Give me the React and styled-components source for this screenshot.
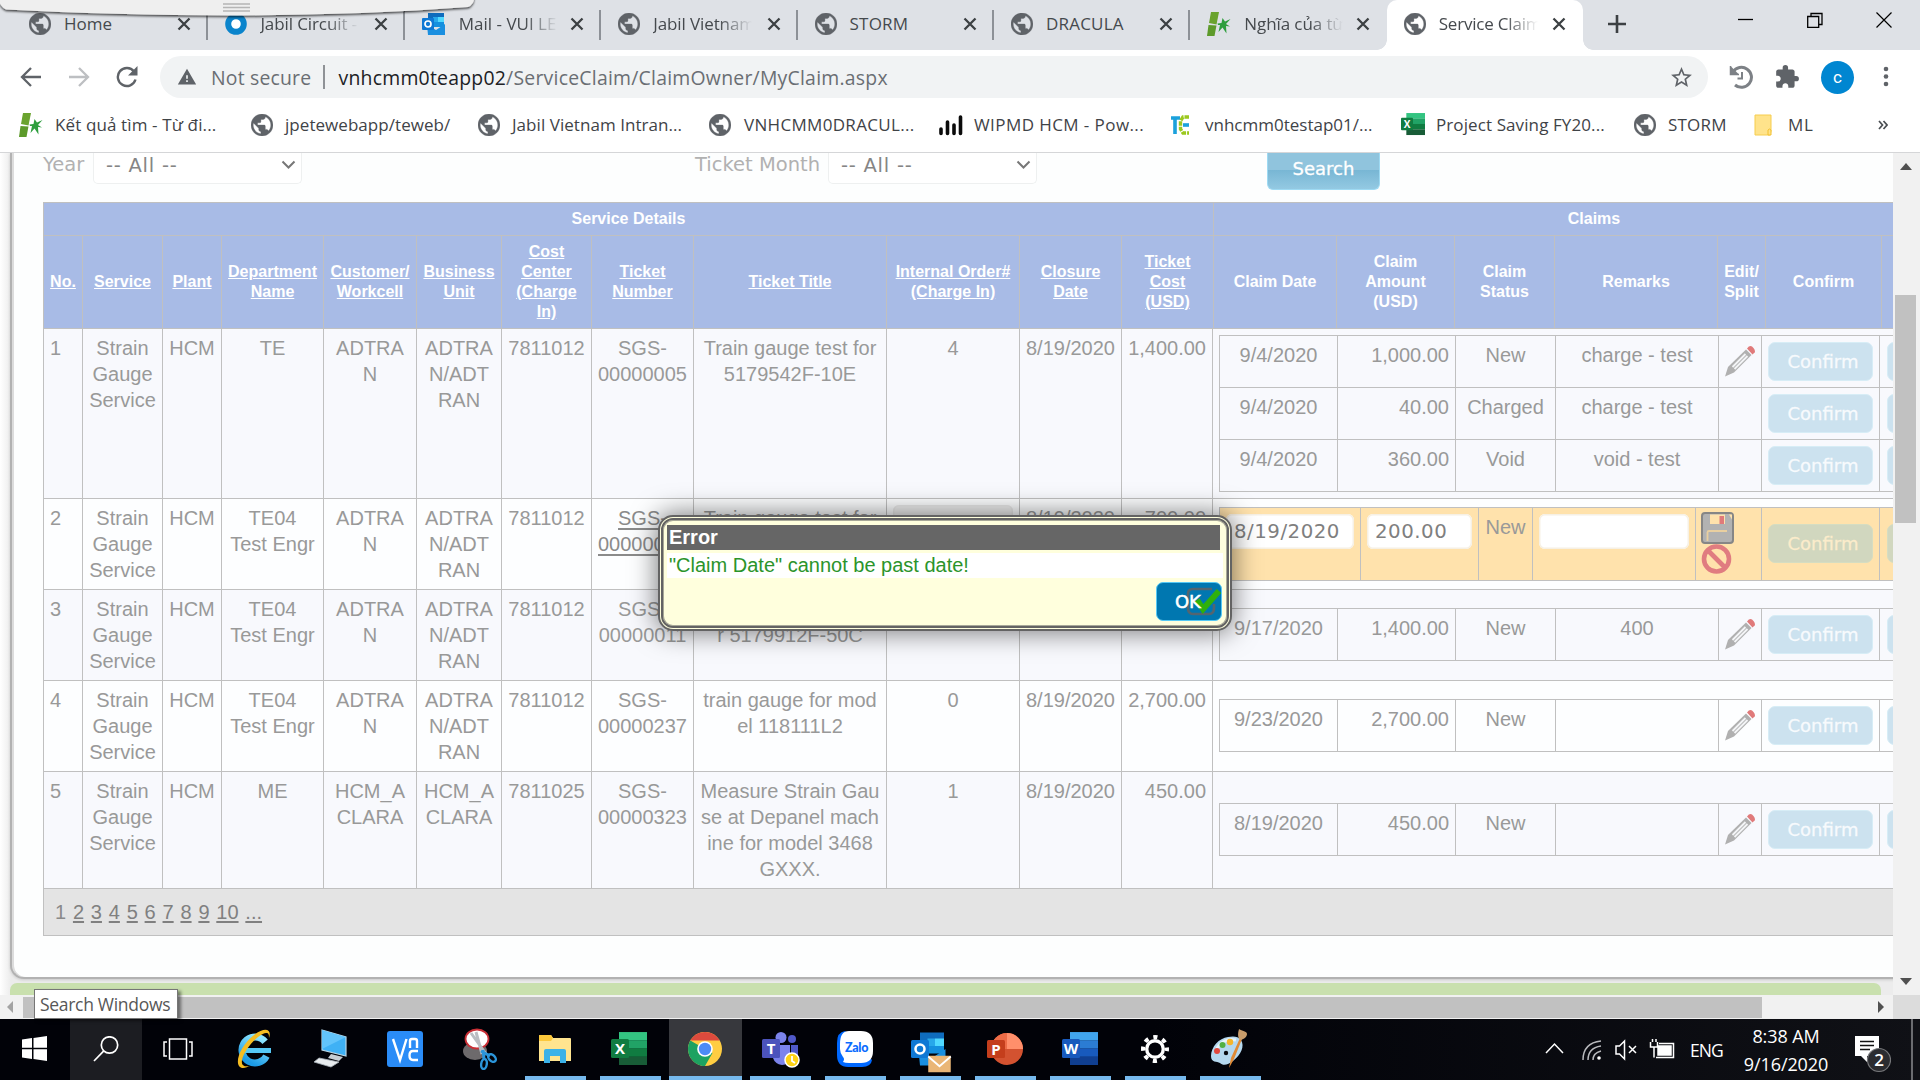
import React from "react";
import styled, { createGlobalStyle, css } from "styled-components";
import { MdWarning, MdStarBorder, MdExtension } from "react-icons/md";

const ui = `"Open Sans", "Noto Sans", sans-serif`;
const arial = `"Liberation Sans", Arial, sans-serif`;
const verdana = `"DejaVu Sans", Verdana, sans-serif`;

const GlobalStyle = createGlobalStyle`
  * { box-sizing: border-box; }
  body { margin: 0; background: #fff; }
`;

const Screen = styled.div`
  position: relative;
  width: 1920px;
  height: 1080px;
  overflow: hidden;
  display: flex;
  flex-direction: column;
  font-family: ${ui};
`;

/* ---------- browser chrome ---------- */
const TabStrip = styled.div`
  height: 50px;
  background: #dee1e6;
  display: flex;
  padding-left: 12px;
  flex: none;
`;
const Tab = styled.div`
  width: 196.4px;
  height: 50px;
  flex: none;
  display: flex;
  align-items: center;
  padding: 0 0 2px 17px;
  position: relative;
  color: #45494d;
  ${(p) =>
    p.$active &&
    css`
      background: #fff;
      border-radius: 10px 10px 0 0;
    `}
  ${(p) =>
    p.$line &&
    css`
      &::after {
        content: "";
        position: absolute;
        right: 0;
        top: 10px;
        width: 2px;
        height: 30px;
        background: #8d9197;
      }
    `}
`;
const TabFoot = styled.i`
  position: absolute;
  bottom: 0;
  ${(p) => p.$side}: -10px;
  width: 10px;
  height: 10px;
  background: radial-gradient(circle at ${(p) => (p.$side === "left" ? "0 0" : "100% 0")}, #dee1e6 9.5px, #fff 10px);
`;
const TabTitle = styled.div`
  margin-left: 13px;
  font-size: 17px;
  letter-spacing: ${(p) => p.$ls || 0}px;
  line-height: 24px;
  white-space: nowrap;
  ${(p) => p.$fade && css`
    mask-image: linear-gradient(90deg, #000 66px, transparent 99px);
  `}
`;
const TabClose = styled.svg`
  width: 14px;
  height: 14px;
  margin-left: auto;
  margin-right: 17px;
  flex: none;
`;
const NewTab = styled.svg`
  width: 20px;
  height: 20px;
  margin: 14px 0 0 24px;
`;
const WindowButtons = styled.div`
  margin-left: auto;
  display: flex;
  gap: 53px;
  padding: 12px 28px 0 0;
  svg { width: 16px; height: 16px; }
`;

const Toolbar = styled.div`
  height: 54px;
  flex: none;
  background: #fff;
  display: flex;
  align-items: center;
  padding: 0 24px 0 20px;
`;
const NavIcon = styled.svg`
  width: 22px;
  height: 22px;
  margin-right: 26px;
  flex: none;
`;
const Omnibox = styled.div`
  margin-left: -4px;
  width: 1548px;
  height: 42px;
  border-radius: 21px;
  background: #f1f3f4;
  display: flex;
  align-items: center;
  padding: 0 14px 0 17px;
  font-size: 19.4px;
  color: #6a6e73;
  white-space: nowrap;
  flex: none;
`;
const Secure = styled.span`
  margin-left: 14px;
  width: 100px;
  letter-spacing: 0.2px;
`;
const OmniLine = styled.i`
  width: 1.5px;
  height: 24px;
  background: #8f9296;
  margin: 0 14px 0 12px;
`;
const Url = styled.span`
  flex: 1;
  letter-spacing: 0.24px;
  b { font-weight: 400; color: #202124; }
`;
const ToolIcons = styled.div`
  display: flex;
  align-items: center;
  justify-content: space-between;
  width: 164px;
  margin-left: 21px;
  color: #5f6368;
`;
const Avatar = styled.div`
  width: 33px;
  height: 33px;
  border-radius: 50%;
  background: #0086d1;
  color: #fff;
  font: 17px/32px Roboto, sans-serif;
  text-align: center;
`;
const Bookmarks = styled.div`
  height: 49px;
  flex: none;
  display: flex;
  align-items: center;
  padding: 0 0 7px 19px;
  border-bottom: 1px solid #d5d6d8;
  color: #3f4347;
  background: #fff;
`;
const Bookmark = styled.div`
  width: ${(p) => p.$w}px;
  flex: none;
  display: flex;
  align-items: center;
  gap: ${(p) => p.$gap ?? 12}px;
  font-size: 17px;
  line-height: 24px;
  letter-spacing: ${(p) => p.$ls || 0}px;
  white-space: nowrap;
  svg { flex: none; }
`;

/* ---------- page ---------- */
const Viewport = styled.div`
  height: 866px;
  flex: none;
  display: grid;
  grid-template-columns: 1893px 27px;
  grid-template-rows: 842px 24px;
`;
const Page = styled.div`
  overflow: hidden;
  background: linear-gradient(90deg, #fff, #ececec 11px);
  padding-left: 10px;
`;
const Panel = styled.div`
  height: 826px;
  width: 1910px;
  background: #fdfefe;
  border: solid #b2b2b2;
  border-width: 0 0 2px 2px;
  border-radius: 0 0 0 14px;
  box-shadow: inset 2px 0 0 #dcdcdc, 0 1px 3px rgba(0, 0, 0, 0.15);
  padding-left: 31px;
`;
const GreenBar = styled.div`
  margin-top: 4px;
  height: 12px;
  width: 1871px;
  border-radius: 7px 7px 0 0;
  background: #c9e0ae;
`;
const Filters = styled.div`
  height: 49px;
  display: flex;
  align-items: flex-start;
  font-family: ${verdana};
`;
const FilterLabel = styled.label`
  font-size: 19.5px;
  line-height: 23px;
  margin: 0 8px 0 0;
  width: ${(p) => p.$w}px;
  color: #b1b1b1;
  white-space: nowrap;
`;
const Select = styled.div`
  width: 209px;
  height: 31px;
  border: 1.5px solid #eef0f0;
  border-top: 0;
  border-radius: 0 0 5px 5px;
  background: #fff;
  color: #858585;
  font-size: 19.5px;
  letter-spacing: 0.75px;
  line-height: 26px;
  padding: 0 5px 0 12px;
  display: flex;
  align-items: flex-start;
  justify-content: space-between;
  margin-right: ${(p) => p.$gap}px;
  svg { margin-top: 7px; }
`;
const SearchButton = styled.div`
  width: 113px;
  height: 37px;
  border: 1.5px solid #9edaf3;
  border-top: 0;
  border-radius: 0 0 6px 6px;
  background: linear-gradient(#90c4dd 0 17px, #78b6d4 17px, #93c9e2);
  color: #fff;
  font-size: 18px;
  line-height: 31px;
  text-align: center;
  -webkit-text-stroke: 0.3px #fff;
`;

/* ---------- grid ---------- */
const line = "#c0c0c0";
const DataGrid = styled.div`
  width: 1931px;
  border-left: 1px solid ${line};
  font-family: ${arial};
  color: #999;
`;
const GroupHead = styled.div`
  display: grid;
  grid-template-columns: 1169px 761px;
  height: 33px;
  background: #a8bbe6;
  border-top: 1px solid ${line};
`;
const HeadRow = styled.div`
  display: grid;
  grid-template-columns: 38px 80px 59px 102px 93px 85px 90px 102px 193px 133px 102px 92px 123px 118px 100px 163px 48px 116px 93px;
  height: 93px;
  background: #a8bbe6;
  border-top: 1px solid ${line};
`;
const Head = styled.div`
  display: flex;
  align-items: center;
  justify-content: center;
  text-align: center;
  color: #fff;
  font-size: 16px;
  font-weight: 700;
  line-height: 20px;
  white-space: pre;
  text-decoration: ${(p) => (p.$link ? "underline" : "none")};
  & + & { border-left: 1px solid ${line}; }
`;
const Row = styled.div`
  display: grid;
  grid-template-columns: 38px 80px 59px 102px 93px 85px 90px 102px 193px 133px 102px 91px 762px;
  height: ${(p) => p.$h}px;
  background: ${(p) => (p.$alt ? "#fdfeff" : "#f8f9fd")};
  border-top: 1px solid ${line};
`;
const Cell = styled.div`
  padding: 6px;
  font-size: 20px;
  line-height: 26px;
  white-space: pre;
  text-align: ${(p) => p.$align || "center"};
  display: flex;
  flex-direction: column;
  align-items: ${(p) => ({ left: "flex-start", right: "flex-end" })[p.$align] || "center"};
  & + & { border-left: 1px solid ${line}; }
  a { text-decoration: underline; text-decoration-thickness: 2px; text-underline-offset: 3px; color: #8b8b8b; }
`;
const ClaimsCell = styled.div`
  border-left: 1px solid ${line};
  padding: 0 0 ${(p) => (p.$single ? 1 : 0)}px 6px;
  display: flex;
  align-items: center;
`;
const Claims = styled.div`
  border: solid ${line};
  border-width: 0 0 1px 1px;
  background: ${(p) => (p.$edit ? "#ffe2ac" : "transparent")};
`;
const Claim = styled.div`
  display: grid;
  grid-template-columns: ${(p) => (p.$edit ? "140px 118px 54px 163px 66px" : "117px 118px 100px 163px 43px")} 118px 120px;
  height: ${(p) => (p.$edit ? 73 : 52)}px;
  border-top: 1px solid ${line};
`;
const ToolCell = styled.div`
  border-left: 1px solid ${line};
  padding-left: ${(p) => p.$pad ?? 6}px;
  padding-bottom: ${(p) => (p.$edit ? 2 : 0)}px;
  display: flex;
  flex-direction: column;
  justify-content: center;
`;
const Button = styled.div`
  width: 105px;
  height: 39px;
  border-radius: 7px;
  border: 1.5px solid ${(p) => (p.$edit ? "#d5ddc2" : "#d7edf6")};
  background: ${(p) => (p.$edit ? "#d1d7bf" : "#cce2ef")};
  color: ${(p) => (p.$edit ? "#fbeccb" : "#f7fafd")};
  font-family: ${verdana};
  font-size: 18px;
  line-height: 37px;
  text-align: center;
  padding-left: 5px;
  -webkit-text-stroke: 0.3px currentColor;
`;
const Input = styled.div`
  width: ${(p) => p.$w}px;
  height: 35px;
  flex: none;
  align-self: flex-start;
  border-radius: 6px;
  background: ${(p) => (p.$off ? "#f1f1f1" : "#fff")};
  box-shadow: inset 0 0 0 1.5px ${(p) => (p.$off ? "#ebebeb" : "#f6f0e4")};
  color: #7f7f7f;
  font-family: ${verdana};
  font-size: 19.8px;
  letter-spacing: 0.5px;
  line-height: 36px;
  text-align: left;
  padding-left: 8px;
`;
const Pager = styled.div`
  height: 48px;
  background: #e4e4e4;
  border: solid ${line};
  border-width: 1px 0;
  padding: 9px 0 0 11px;
  display: flex;
  gap: 6.8px;
  font-size: 20px;
  line-height: 28px;
  color: #8a8a8a;
  a { text-decoration: underline; text-decoration-thickness: 2px; text-underline-offset: 2px; color: #808080; }
`;

/* ---------- scroll bars ---------- */
const VScroll = styled.div`
  background: #f1f1f1;
  display: flex;
  flex-direction: column;
  align-items: center;
  justify-content: space-between;
  padding: 10px 2px 10px 0;
`;
const VThumb = styled.div`
  width: 21px;
  height: 228px;
  background: #c1c1c1;
  margin: 125px 0 auto;
`;
const HScroll = styled.div`
  background: #f1f1f1;
  display: flex;
  align-items: center;
  padding: 0 9px 0 7px;
`;
const HThumb = styled.div`
  width: 1739px;
  height: 21px;
  background: #c1c1c1;
  margin: 0 auto 0 10px;
`;
const Corner = styled.div`
  background: #dcdcdc;
`;

/* ---------- dialog ---------- */
const Dialog = styled.div`
  position: absolute;
  left: 658px;
  top: 515px;
  width: 574px;
  height: 116px;
  border: 5px double #636363;
  border-radius: 15px;
  background: #ffffdd;
  box-shadow: 0 0 26px 2px rgba(0, 0, 0, 0.5), inset 0 0 0 1px #a8a898;
  padding: 5px 2px 0 4px;
  display: flex;
  flex-direction: column;
  font-family: ${arial};
`;
const DialogTitle = styled.div`
  width: 553px;
  height: 25px;
  background: #666;
  color: #fff;
  font-size: 20px;
  font-weight: 700;
  line-height: 24px;
  padding-left: 2px;
`;
const DialogText = styled.div`
  margin: 3px 0 0;
  width: 556px;
  height: 25px;
  background: #fff;
  color: #2b942b;
  font-size: 20px;
  line-height: 24px;
  padding-left: 2px;
`;
const OkButton = styled.div`
  position: relative;
  margin: 4px 3px 0 auto;
  width: 66px;
  height: 39px;
  flex: none;
  border: 1.5px solid #55c8f5;
  border-radius: 7px;
  background: #0077b0;
  color: #fff;
  font: 18px/38px ${verdana};
  padding-left: 18px;
  -webkit-text-stroke: 0.5px #fff;
  svg { position: absolute; right: 0; top: 1px; }
  span { position: relative; letter-spacing: -0.2px; }
`;
const Tooltip = styled.div`
  position: absolute;
  left: 34px;
  top: 989px;
  width: 144px;
  height: 30px;
  border: 1.5px solid #767676;
  background: #fff;
  box-shadow: 3px 2px 3px rgba(0, 0, 0, 0.45);
  color: #575757;
  font-size: 17.5px;
  letter-spacing: -0.3px;
  line-height: 29px;
  padding-left: 5px;
  white-space: nowrap;
`;
const DockHandle = styled.svg`
  position: absolute;
  left: 0;
  top: 0;
`;

/* ---------- taskbar ---------- */
const Taskbar = styled.div`
  height: 61px;
  flex: none;
  background: linear-gradient(90deg, #010208 60%, #101116);
  display: flex;
  color: #fff;
`;
const Task = styled.div`
  width: ${(p) => p.$w || 75}px;
  height: 61px;
  flex: none;
  display: flex;
  align-items: center;
  justify-content: center;
  padding: 0 ${(p) => p.$shift ?? 2}px 2px 0;
  position: relative;
  &::after {
    content: "";
    display: ${(p) => (p.$open ? "block" : "none")};
    position: absolute;
    bottom: 0;
    left: ${(p) => (p.$on ? 1 : 7)}px;
    right: ${(p) => (p.$on ? 1 : 7)}px;
    height: 4px;
    background: #76b9ed;
  }
  &::before {
    content: "";
    display: ${(p) => (p.$on ? "block" : "none")};
    position: absolute;
    inset: 0 1px;
    background: ${(p) => (p.$open ? "#37383d" : "#1c1d22")};
  }
  svg { position: relative; flex: none; }
`;
const Tray = styled.div`
  margin-left: auto;
  display: flex;
  align-items: center;
  font-size: 17.5px;
  svg { flex: none; }
`;
const TrayIcons = styled.svg`
  margin-right: -48px;
`;
const Lang = styled.span`
  width: 34px;
  margin: 0 19px 0 15px;
  letter-spacing: -0.9px;
`;
const Clock = styled.div`
  width: 86px;
  text-align: center;
  font-size: 18px;
  line-height: 28px;
  letter-spacing: -0.1px;
  white-space: nowrap;
`;
const Notify = styled.svg`
  margin: 10px 20px 0 26px;
`;
const ShowDesktop = styled.i`
  width: 9px;
  height: 61px;
  border-left: 2px solid #6b6c70;
`;

/* ---------- icons ---------- */
const Globe = () => (
  <svg width="22" height="22" viewBox="2 2 20 20">
    <path
      d="M12 2C6.480 2 2 6.480 2 12s4.480 10 10 10 10-4.480 10-10S17.520 2 12 2zm-1 17.930c-3.950-.490-7-3.850-7-7.930 0-.620.080-1.210.210-1.790L9 15v1c0 1.100.900 2 2 2v1.930zm6.900-2.540c-.260-.810-1-1.390-1.900-1.390h-1v-3c0-.550-.450-1-1-1H8v-2h2c.550 0 1-.450 1-1V7h2c1.100 0 2-.900 2-2v-.410c2.930 1.190 5 4.060 5 7.410 0 2.080-.800 3.970-2.100 5.390z"
      fill="#5f6368"
      stroke="#5f6368"
      strokeWidth=".3"
    />
  </svg>
);

const Bamboo = () => (
  <svg width="24" height="24" viewBox="0 0 24 24">
    <path d="M4 0h8L9.500 12.500 2 11z" fill="#6aa32e" />
    <path d="M1.500 13l8 .500L7.500 24H0z" fill="#5d9a2a" />
    <path d="M11 13l-.500-1.500 4-.500 1-5 2.500 3.500L23.500 7 19 12l4 2.500-4-.500.500 7.500-4-6-4 4.500 1.500-7z" fill="#2e9e3e" />
  </svg>
);
const Ring = () => (
  <svg width="22" height="22" viewBox="0 0 22 22">
    <circle cx="11" cy="11" r="7.800" fill="#fff" stroke="#0a84cc" strokeWidth="6" />
  </svg>
);
const Outlook = ({ size = 24, mail }) => (
  <svg width={size} height={size} viewBox="0 0 24 24" overflow="visible">
    <rect x="6" y="1" width="16" height="13" fill="#0f6cbd" />
    <rect x="11" y="5" width="5" height="5" fill="#28a8ea" />
    <rect x="16" y="5" width="6" height="5" fill="#50d9ff" />
    <rect x="11" y="10" width="11" height="5" fill="#1490df" />
    <path d="M5 13l9 5 9-6v11H6z" fill="#1a8fe0" />
    <rect x="0" y="6" width="12" height="12" rx="1" fill="#0f78d4" />
    <circle cx="6" cy="12" r="3" fill="none" stroke="#fff" strokeWidth="1.700" />
    {mail && (
      <g>
        <rect x="11.500" y="16.500" width="15" height="11" fill="#eab676" />
        <path d="M11.500 17l7.500 6.500 7.500-6.500" fill="none" stroke="#fff" strokeWidth="1.200" />
      </g>
    )}
  </svg>
);
const Bars = () => (
  <svg width="24" height="22" viewBox="0 0 24 22" stroke="#0b0b0b" strokeWidth="3.600" strokeLinecap="round">
    <path d="M2 15v4.500M8.500 8v11.500M15 11v8.500M21.500 3v16.500" />
  </svg>
);
const TeLogo = () => (
  <svg width="22" height="20" viewBox="0 0 22 20" fill="none">
    <path d="M1 3h9M5 3v16" stroke="#1ba1dc" strokeWidth="3.600" />
    <path d="M19 2h-6l-2.500 4v8l2.500 4h6" stroke="#9bc81e" strokeWidth="3.400" strokeDasharray="4.500 1" />
    <path d="M13 10h6" stroke="#1ba1dc" strokeWidth="3.600" />
  </svg>
);
const OfficeIcon = ({ size, letter, bands, badge }) => (
  <svg width={size} height={size * 0.92} viewBox="0 0 36 33">
    {bands.map((c, i) => (
      <rect key={c} x="8" y={i * 8.2} width="28" height="8.400" fill={c} />
    ))}
    <rect x="0" y="7" width="18" height="19" rx="1.500" fill={badge} />
    <text x="9" y="22" fontFamily="Open Sans, sans-serif" fontWeight="700" fontSize="15" fill="#fff" textAnchor="middle">{letter}</text>
  </svg>
);
const excelBands = ["#33c481", "#21a366", "#107c41", "#185c37"];
const Folder = () => (
  <svg width="18" height="22" viewBox="0 0 18 22">
    <path d="M1 1h16v16l-1 4H1z" fill="#ffe38b" stroke="#f6cd4e" strokeWidth="1" />
    <path d="M14 21v-5q1.500-2 3 0v5z" fill="#ffe38b" stroke="#f2c02f" strokeWidth="1" />
  </svg>
);
const Chevron = () => (
  <svg width="15" height="10" viewBox="0 0 15 10">
    <path d="M1.500 1.500l6 6 6-6" fill="none" stroke="#777" strokeWidth="2" />
  </svg>
);
const Pencil = () => (
  <svg width="30" height="31" viewBox="0 0 30 31">
    <path d="M0 30.500l3-9.500L21 3.500l5.500 5.500L9 26.500z" fill="#b0b0b0" />
    <path d="M7.500 21L20.500 8M9.500 23l13-13" stroke="#f3f4f6" strokeWidth="1.900" />
    <path d="M22 2.500q3.500-4.500 6.500-.500t0 5.500l-1 1-5.500-6z" fill="#e07a7a" />
  </svg>
);
const Save = () => (
  <svg width="33" height="32" viewBox="0 0 33 32">
    <rect x="1" y="1" width="31" height="30" rx="3" fill="#b2b2b2" stroke="#868686" strokeWidth="2" />
    <path d="M28 2.500h3v5z" fill="#ffe2ac" />
    <rect x="9" y="2.500" width="15" height="9.500" fill="#ffe2ac" />
    <rect x="18.500" y="4" width="4.500" height="8" fill="#e07a7a" />
    <path d="M6.500 29V20.500q0-1.500 1.500-1.500h18" fill="none" stroke="#e9cfa0" strokeWidth="1.800" />
  </svg>
);
const Forbid = () => (
  <svg width="31" height="30" viewBox="0 0 31 30">
    <circle cx="15.500" cy="15" r="12.500" fill="none" stroke="#e07c80" strokeWidth="4.600" />
    <path d="M7 6.500l17 17" stroke="#e07c80" strokeWidth="4.600" />
  </svg>
);
const Triangle = ({ d, c = "#505050", w = 16, h = 8 }) => (
  <svg width={w} height={h} viewBox={`0 0 ${w} ${h}`}><path d={d} fill={c} /></svg>
);

const Ie = () => (
  <svg width="36" height="42" viewBox="0 0 36 42" overflow="visible">
    <defs>
      <linearGradient id="ieBlue" x1="0" y1="0" x2="0" y2="1">
        <stop offset="0" stopColor="#8fe6ff" />
        <stop offset="1" stopColor="#1c9be6" />
      </linearGradient>
    </defs>
    <circle cx="19" cy="22" r="13" fill="none" stroke="url(#ieBlue)" strokeWidth="7" strokeDasharray="66 16" transform="rotate(28 19 22)" />
    <path d="M9 20h26v5H9z" fill="#55c8f6" />
    <path d="M33 10C36 2 30-2 18 7 6 16-1 32 3 38c3 4 8 1 11 0-5 1-9 0-8-6C8 22 22 6 30 5c3 0 3 2 3 5z" fill="#f5bd22" />
  </svg>
);
const Pc = () => (
  <svg width="34" height="40" viewBox="0 0 34 40">
    <path d="M9 1l24 7v19L9 21z" fill="#3fb1f5" stroke="#b8d6e6" strokeWidth="1.200" />
    <path d="M9 1l24 7-24 12z" fill="#62c4fb" />
    <path d="M18 25l12 3-4 4-11-3z" fill="#c7ced4" />
    <path d="M6 29l20 4-8 5-17-5z" fill="#e7ebee" stroke="#a9b3ba" strokeWidth=".800" />
  </svg>
);
const Vnc = () => (
  <svg width="36" height="36" viewBox="0 0 36 36">
    <rect width="36" height="36" rx="3" fill="#2a8cf7" />
    <path d="M6 8l7 21 6.500-21M23 17V10q0-2 2-2h3q2 0 2 2v7M31 20h-5q-3.500 0-3.500 4.500T26 29h5" fill="none" stroke="#fff" strokeWidth="2.400" />
  </svg>
);
const Snip = () => (
  <svg width="34" height="42" viewBox="0 0 34 42">
    <ellipse cx="12" cy="23" rx="12" ry="9" fill="#6d6a6c" />
    <ellipse cx="14" cy="11" rx="11.500" ry="9.500" fill="#fff" stroke="#c92f36" strokeWidth="1.800" />
    <path d="M8 5l15 21M13 4l6 22" stroke="#b9bdc2" strokeWidth="3" />
    <ellipse cx="29" cy="30" rx="4.500" ry="3" transform="rotate(45 29 30)" fill="none" stroke="#2b95da" strokeWidth="2.400" />
    <ellipse cx="21" cy="36" rx="2.800" ry="5" transform="rotate(8 21 36)" fill="none" stroke="#2b95da" strokeWidth="2.400" />
    <path d="M18 23l9 5M20 22l1 9" stroke="#2b95da" strokeWidth="3" />
  </svg>
);
const Explorer = () => (
  <svg width="32" height="28" viewBox="0 0 32 28">
    <path d="M0 1q0-1 1-1h11l2 3h17q1 0 1 1v22H0z" fill="#ffe48f" />
    <path d="M0 1q0-1 1-1h11l2 3-2 3H0z" fill="#fcc83b" />
    <path d="M5 28V16q0-2 2-2h18q2 0 2 2v12h-6v-7H11v7z" fill="#3cb2e8" />
  </svg>
);
const Chrome = () => (
  <svg width="34" height="34" viewBox="0 0 34 34">
    <circle cx="17" cy="17" r="17" fill="#ffcd42" />
    <path d="M2.300 8.500A17 17 0 0 1 31.700 8.500H17z" fill="#dc4a3d" />
    <path d="M2.300 8.500A17 17 0 0 0 17 34l7.500-13L17 17z" fill="#1da261" />
    <circle cx="17" cy="17" r="7.800" fill="#fff" />
    <circle cx="17" cy="17" r="6.200" fill="#4c8bf5" />
  </svg>
);
const Teams = () => (
  <svg width="38" height="33" viewBox="0 0 38 33" overflow="visible">
    <circle cx="19" cy="5.500" r="5.500" fill="#7b83eb" />
    <circle cx="30" cy="7" r="4" fill="#5059c9" />
    <path d="M11 13h17v13q-1 7-8 7-7-1-9-7z" fill="#7b83eb" />
    <path d="M29 13h7v12q-2 3-7 2z" fill="#5059c9" />
    <rect y="7" width="18" height="19" rx="1.500" fill="#4b53bc" />
    <text x="9" y="22" fontFamily="Open Sans, sans-serif" fontWeight="700" fontSize="15" fill="#fff" textAnchor="middle">T</text>
    <circle cx="30" cy="28" r="7" fill="#fcd116" stroke="#fff" strokeWidth="1.500" />
    <path d="M30 24v5l3 2" fill="none" stroke="#fff" strokeWidth="1.800" />
  </svg>
);
const Zalo = () => (
  <svg width="36" height="36" viewBox="0 0 36 36">
    <path d="M8 0Q0 1 0 12v12q0 12 11 12h14q9 0 10-7z" fill="#0068ff" />
    <path d="M12 0h12q12 0 12 12v8q0 12-12 12H12q-4 0-6-1 2-3 0-5-3-4-3-8v-5Q3 0 12 0z" fill="#fff" />
    <text x="19.500" y="21" fontFamily="Lato, sans-serif" fontWeight="900" fontSize="12.500" fill="#0a6cff" textAnchor="middle" letterSpacing="-.3">Zalo</text>
  </svg>
);
const Ppt = () => (
  <svg width="36" height="32" viewBox="0 0 36 32">
    <circle cx="20" cy="16" r="16" fill="#d35230" />
    <path d="M20 0a16 16 0 0 1 16 16H20z" fill="#ff8f6b" />
    <path d="M20 0v16H4A16 16 0 0 1 20 0z" fill="#ed6c47" />
    <rect y="7" width="18" height="18" rx="1.500" fill="#c43e1c" />
    <text x="9" y="21.500" fontFamily="Open Sans, sans-serif" fontWeight="700" fontSize="15" fill="#fff" textAnchor="middle">P</text>
  </svg>
);
const Gear = () => (
  <svg width="28" height="28" viewBox="0 0 28 28" fill="none" stroke="#fff">
    <circle cx="14" cy="14" r="8.300" strokeWidth="3.400" />
    <circle cx="14" cy="14" r="12" strokeWidth="4" strokeDasharray="4.200 5.225" strokeDashoffset="2.100" />
  </svg>
);
const Paint = () => (
  <svg width="36" height="36" viewBox="0 0 36 36" overflow="visible">
    <path d="M17 6C8 7 0 16 0 25c0 7 6 5 9 7 3 3 8 2 13-2 8-6 12-15 8-21-3-4-8-4-13-3z" fill="#b5d8ef" />
    <path d="M5 20c3-9 12-13 20-11" stroke="#e6f4fc" strokeWidth="3" fill="none" />
    <circle cx="6" cy="20" r="3" fill="#e2483d" />
    <circle cx="11.500" cy="14" r="3" fill="#52b043" />
    <circle cx="19" cy="11" r="3.200" fill="#f6b52b" />
    <circle cx="15" cy="22" r="2.200" fill="#0a0b10" />
    <path d="M18 37l2-10 9-20 2 1-8 20z" fill="#e08a35" />
    <path d="M28 8c-2-5 0-9 0-10 3 2 8 2 8 5s-3 5-6 6z" fill="#c99d6b" />
  </svg>
);
const History = () => (
  <svg width="24" height="26" viewBox="0 0 24 26" fill="none" stroke="#7d8186">
    <path d="M4 8A10 10 0 1 1 6 21" strokeWidth="3" />
    <path d="M13 8v6.500H8.500" strokeWidth="2" />
    <path d="M1.500 2v8.500H10" fill="#7d8186" strokeWidth="1.500" />
  </svg>
);

/* ---------- data ---------- */
const tabs = [
  { t: "Home", icon: <Globe /> },
  { t: "Jabil Circuit -", icon: <Ring />, fade: 1, ls: -0.1 },
  { t: "Mail - VUI LE", icon: <Outlook />, fade: 1 },
  { t: "Jabil Vietnam", icon: <Globe />, fade: 1, ls: -0.1 },
  { t: "STORM", icon: <Globe />, ls: 0.2 },
  { t: "DRACULA", icon: <Globe />, ls: 0.2 },
  { t: "Nghĩa của từ", icon: <Bamboo />, fade: 1, ls: -0.1 },
  { t: "Service Claim", icon: <Globe />, fade: 1, active: 1, ls: -0.2 },
];
const bookmarks = [
  { t: "Kết quả tìm - Từ đi...", w: 232, ls: 0.12, icon: <Bamboo /> },
  { t: "jpetewebapp/teweb/", w: 227, ls: 0.05, icon: <Globe /> },
  { t: "Jabil Vietnam Intran...", w: 231, ls: 0.05, icon: <Globe /> },
  { t: "VNHCMM0DRACUL...", w: 230, gap: 13, ls: 0.32, icon: <Globe /> },
  { t: "WIPMD HCM - Pow...", w: 231, gap: 11, ls: 0.42, icon: <Bars /> },
  { t: "vnhcmm0testap01/...", w: 231, gap: 13, icon: <TeLogo /> },
  { t: "Project Saving FY20...", w: 233, gap: 11, ls: 0.1, icon: <OfficeIcon size={24} letter="X" bands={excelBands} badge="#107c41" /> },
  { t: "STORM", w: 120, ls: 0.2, icon: <Globe /> },
  { t: "ML", w: 110, gap: 16, ls: 0.8, icon: <Folder /> },
];
const heads = ["No.", "Service", "Plant", "Department\nName", "Customer/\nWorkcell", "Business\nUnit", "Cost\nCenter\n(Charge\nIn)", "Ticket\nNumber", "Ticket Title", "Internal Order#\n(Charge In)", "Closure\nDate", "Ticket\nCost\n(USD)"];
const claimHeads = ["Claim Date", "Claim\nAmount\n(USD)", "Claim\nStatus", "Remarks", "Edit/\nSplit", "Confirm", ""];
const service = "Strain\nGauge\nService";
const rows = [
  {
    h: 170,
    cells: ["1", service, "HCM", "TE", "ADTRA\nN", "ADTRA\nN/ADT\nRAN", "7811012", "SGS-\n00000005", "Train gauge test for\n5179542F-10E", "4", "8/19/2020", "1,400.00"],
    claims: [
      ["9/4/2020", "1,000.00", "New", "charge - test", true],
      ["9/4/2020", "40.00", "Charged", "charge - test", false],
      ["9/4/2020", "360.00", "Void", "void - test", false],
    ],
  },
  {
    h: 91,
    edit: true,
    cells: ["2", service, "HCM", "TE04\nTest Engr", "ADTRA\nN", "ADTRA\nN/ADT\nRAN", "7811012", "SGS-\n00000006", "Train gauge test for", "0", "8/19/2020", "700.00"],
    claims: [["8/19/2020", "200.00", "New", "", true]],
  },
  {
    h: 91,
    cells: ["3", service, "HCM", "TE04\nTest Engr", "ADTRA\nN", "ADTRA\nN/ADT\nRAN", "7811012", "SGS-\n00000011", "Train gauge test fo\nr 5179912F-50C", "", "8/19/2020", "1,400.00"],
    claims: [["9/17/2020", "1,400.00", "New", "400", true]],
  },
  {
    h: 91,
    cells: ["4", service, "HCM", "TE04\nTest Engr", "ADTRA\nN", "ADTRA\nN/ADT\nRAN", "7811012", "SGS-\n00000237", "train gauge for mod\nel 118111L2", "0", "8/19/2020", "2,700.00"],
    claims: [["9/23/2020", "2,700.00", "New", "", true]],
  },
  {
    h: 117,
    cells: ["5", service, "HCM", "ME", "HCM_A\nCLARA", "HCM_A\nCLARA", "7811025", "SGS-\n00000323", "Measure Strain Gau\nse at Depanel mach\nine for model 3468\nGXXX.", "1", "8/19/2020", "450.00"],
    claims: [["8/19/2020", "450.00", "New", "", true]],
  },
];

function ClaimRow({ claim, edit }) {
  const [date, amount, status, remarks, editable] = claim;
  return (
    <Claim $edit={edit}>
      <Cell>{edit ? <Input $w={128}>{date}</Input> : date}</Cell>
      <Cell $align="right">{edit ? <Input $w={105}>{amount}</Input> : amount}</Cell>
      <Cell>{status}</Cell>
      <Cell>{edit ? <Input $w={150} /> : remarks}</Cell>
      <ToolCell $edit={edit} $pad={edit ? 5 : 6}>
        {edit ? <><Save /><Forbid /></> : editable && <Pencil />}
      </ToolCell>
      <ToolCell $edit={edit}><Button $edit={edit}>Confirm</Button></ToolCell>
      <ToolCell $edit={edit} $pad={7}><Button $edit={edit} /></ToolCell>
    </Claim>
  );
}

function GridRow({ row, index }) {
  return (
    <Row $h={row.h} $alt={index % 2 === 1}>
      {row.cells.map((c, i) => (
        <Cell key={i} $align={i === 0 ? "left" : i === 11 ? "right" : undefined}>
          {row.edit && i === 7 ? <a>{c}</a> : row.edit && i === 9 ? <Input $w={120} $off>{c}</Input> : c}
        </Cell>
      ))}
      <ClaimsCell $single={index > 1}>
        <Claims $edit={row.edit}>
          {row.claims.map((c, i) => <ClaimRow key={i} claim={c} edit={row.edit} />)}
        </Claims>
      </ClaimsCell>
    </Row>
  );
}

export default function App() {
  return (
    <Screen>
      <GlobalStyle />
      <TabStrip>
        {tabs.map((t, i) => (
          <Tab key={t.t} $active={t.active} $line={i < 6}>
            {t.active && <><TabFoot $side="left" /><TabFoot $side="right" /></>}
            {t.icon}
            <TabTitle $fade={t.fade} $ls={t.ls}>{t.t}</TabTitle>
            <TabClose viewBox="0 0 14 14"><path d="M1.500 1.500l11 11M12.500 1.500l-11 11" stroke="#3c4043" strokeWidth="2.300" /></TabClose>
          </Tab>
        ))}
        <NewTab viewBox="0 0 20 20"><path d="M10 1v18M1 10h18" stroke="#3c4043" strokeWidth="2.600" /></NewTab>
        <WindowButtons>
          <svg viewBox="0 0 16 16"><path d="M0 7.500h15" stroke="#000" strokeWidth="1.300" /></svg>
          <svg viewBox="0 0 16 16" fill="none" stroke="#000" strokeWidth="1.300"><path d="M.700 4.500h11v11h-11zM4 4.500v-3h11v11h-3" /></svg>
          <svg viewBox="0 0 16 16"><path d="M.500 .500l15 15M15.500 .500l-15 15" stroke="#000" strokeWidth="1.200" /></svg>
        </WindowButtons>
      </TabStrip>

      <Toolbar>
        <NavIcon viewBox="0 0 22 22" fill="none" stroke="#5f6368" strokeWidth="2.300"><path d="M21 11H2.500M11 2l-9 9 9 9" /></NavIcon>
        <NavIcon viewBox="0 0 22 22" fill="none" stroke="#bdbfc2" strokeWidth="2.300"><path d="M1 11h18.500M11 2l9 9-9 9" /></NavIcon>
        <NavIcon viewBox="0 0 22 22"><path d="M19.500 13.500A9 9 0 1 1 18 5.500" fill="none" stroke="#5f6368" strokeWidth="2.400" /><path d="M21.500 0v9.500H12z" fill="#5f6368" /></NavIcon>
        <Omnibox>
          <MdWarning size={20} color="#5f6368" />
          <Secure>Not secure</Secure>
          <OmniLine />
          <Url><b>vnhcmm0teapp02</b>/ServiceClaim/ClaimOwner/MyClaim.aspx</Url>
          <MdStarBorder size={25} color="#5f6368" />
        </Omnibox>
        <ToolIcons>
          <History />
          <MdExtension size={26} />
          <Avatar>c</Avatar>
          <svg width="18" height="22" viewBox="0 0 18 22" fill="#5f6368"><circle cx="11" cy="3" r="2.300" /><circle cx="11" cy="10.500" r="2.300" /><circle cx="11" cy="18" r="2.300" /></svg>
        </ToolIcons>
      </Toolbar>

      <Bookmarks>
        {bookmarks.map((b, i) => (
          <Bookmark key={i} $w={b.w} $ls={b.ls} $gap={b.gap}>{b.icon}{b.t}</Bookmark>
        ))}
        <svg width="24" height="10" viewBox="-14 0 24 10"><path d="M1 1l3.500 4L1 9M5.500 1L9 5 5.500 9" fill="none" stroke="#4a4e52" strokeWidth="1.700" /></svg>
      </Bookmarks>

      <Viewport>
        <Page>
          <Panel>
            <Filters>
              <FilterLabel $w={42}>Year</FilterLabel>
              <Select $gap={393}>-- All --<Chevron /></Select>
              <FilterLabel $w={125}>Ticket Month</FilterLabel>
              <Select $gap={230}>-- All --<Chevron /></Select>
              <SearchButton>Search</SearchButton>
            </Filters>
            <DataGrid>
              <GroupHead>
                <Head>Service Details</Head>
                <Head>Claims</Head>
              </GroupHead>
              <HeadRow>
                {heads.map((h) => <Head key={h} $link>{h}</Head>)}
                {claimHeads.map((h) => <Head key={h}>{h}</Head>)}
              </HeadRow>
              {rows.map((r, i) => <GridRow key={i} row={r} index={i} />)}
              <Pager>
                <span>1</span>
                {["2", "3", "4", "5", "6", "7", "8", "9", "10", "..."].map((n) => <a key={n}>{n}</a>)}
              </Pager>
            </DataGrid>
          </Panel>
          <GreenBar />
        </Page>
        <VScroll>
          <Triangle w={12} h={7} d="M0 7l6-7 6 7z" />
          <VThumb />
          <Triangle w={12} h={7} d="M0 0h12l-6 7z" />
        </VScroll>
        <HScroll>
          <Triangle w={6} h={12} d="M6 0v12L0 6z" c="#a3a3a3" />
          <HThumb />
          <Triangle w={6} h={12} d="M0 0l6 6-6 6z" />
        </HScroll>
        <Corner />
      </Viewport>

      <Taskbar>
        <Task $w={69} $shift={0}><svg width="25" height="25" viewBox="0 0 25 25" fill="#fff"><path d="M0 3.500l10-1.400v9.700H0zM11.500 1.900L25 0v11.800H11.500zM0 13.200h10v9.700L0 21.500zM11.500 13.200H25V25l-13.500-1.900z" /></svg></Task>
        <Task $on $w={74} $shift={0}><svg width="26" height="26" viewBox="0 0 26 26" fill="none" stroke="#fff" strokeWidth="1.700"><circle cx="16.500" cy="9" r="8.200" /><path d="M10.800 14.800L1 25" /></svg></Task>
        <Task $shift={5}><svg width="30" height="22" viewBox="0 0 30 22" fill="none" stroke="#fff" strokeWidth="1.500"><path d="M6.500 1h17v20h-17zM4 4H1v14h3M26 4h3v14h-3" /></svg></Task>
        <Task $shift={4}><Ie /></Task>
        <Task><Pc /></Task>
        <Task><Vnc /></Task>
        <Task><Snip /></Task>
        <Task $open><Explorer /></Task>
        <Task $open $shift={3}><OfficeIcon size={36} letter="X" bands={excelBands} badge="#107c41" /></Task>
        <Task $open $on><Chrome /></Task>
        <Task $open $shift={0}><Teams /></Task>
        <Task $open><Zalo /></Task>
        <Task $open $shift={3}><Outlook size={36} mail /></Task>
        <Task $open><Ppt /></Task>
        <Task $open><OfficeIcon size={36} letter="W" bands={["#41a5ee", "#2b7cd3", "#185abd", "#103f91"]} badge="#185abd" /></Task>
        <Task $open><Gear /></Task>
        <Task $open $shift={3}><Paint /></Task>
        <Tray>
          <TrayIcons width="178" height="24" viewBox="0 0 178 24" fill="none" stroke="#fff" strokeWidth="1.500">
            <path d="M1 15l8.500-9 8.500 9" />
            <path d="M38 22Q38 5 56 3M43 22q0-12 13-14M48 22q0-7 8-9" stroke="#b9babd" />
            <circle cx="54" cy="20" r="1.800" fill="#fff" stroke="none" />
            <path d="M71 8h3.500l5-5v18l-5-5H71zM84 8l7 7M91 8l-7 7" />
            <path d="M113 8h13v9h-13z" fill="#fff" />
            <path d="M114 5.500h14.500v14H111" />
            <path d="M105.500 4v5h7V4M107.500 1v3M111 1v3M109 9v10.500" />
          </TrayIcons>
          <Lang>ENG</Lang>
          <Clock>8:38 AM<br />9/16/2020</Clock>
          <Notify width="36" height="38" viewBox="0 0 36 38">
            <path d="M0 0h24v20H12v6l-6-6H0z" fill="#fff" />
            <path d="M5 5.500h14M5 9.500h14M5 13.500h10" stroke="#111" strokeWidth="1.400" />
            <circle cx="24" cy="24" r="11.500" fill="#2b2c30" stroke="#77787b" strokeWidth="1.200" />
            <text x="24" y="30" fontFamily="Open Sans, sans-serif" fontWeight="600" fontSize="17" fill="#fff" textAnchor="middle">2</text>
          </Notify>
          <ShowDesktop />
        </Tray>
      </Taskbar>

      <Dialog>
        <DialogTitle>Error</DialogTitle>
        <DialogText>"Claim Date" cannot be past date!</DialogText>
        <OkButton>
          <svg width="36" height="34" viewBox="0 0 36 34" fill="none">
            <path d="M27 5H8Q3 5 3 10v14q0 6 5 6h16q5 0 5-6v-4" stroke="#54656f" strokeWidth="2.600" />
            <path d="M12 16l6 9L34 7" stroke="#2fb00c" strokeWidth="6" />
          </svg>
          <span>OK</span>
        </OkButton>
      </Dialog>
      <Tooltip>Search Windows</Tooltip>
      <DockHandle width="480" height="24" viewBox="0 0 480 24">
        <defs>
          <filter id="drop" x="-5%" y="-20%" width="110%" height="160%">
            <feDropShadow dx="0" dy="1.500" stdDeviation="1.200" floodOpacity=".75" />
          </filter>
        </defs>
        <path d="M-4-4H474q1 8-6 11Q360 15 237 15.500 110 15 6 9.500 1 8-4-4z" fill="#efefef" filter="url(#drop)" />
        <path d="M223 4h27M223 7.500h27M223 11h27" stroke="#b5b5b5" strokeWidth="1.600" />
      </DockHandle>
    </Screen>
  );
}
